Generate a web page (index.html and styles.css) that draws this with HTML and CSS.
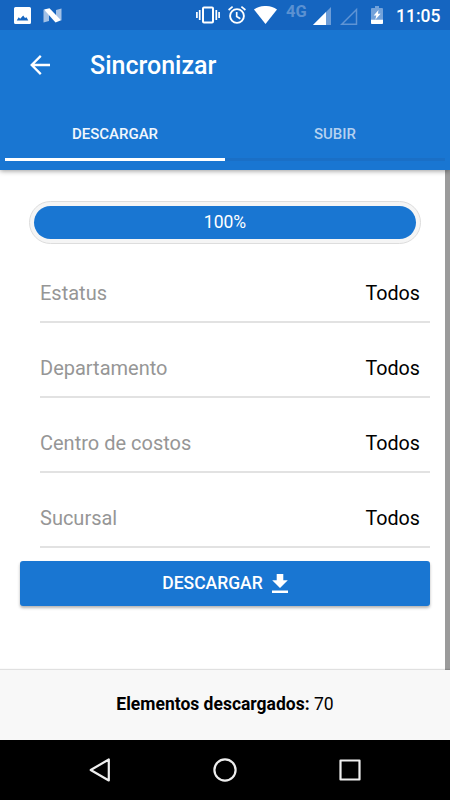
FILE: index.html
```html
<!DOCTYPE html>
<html lang="es">
<head>
    <meta charset="UTF-8">
    <meta name="viewport" content="width=device-width, initial-scale=1.0">
    <title>Sincronizar</title>
    <link rel="stylesheet" href="styles.css">
</head>
<body>

    <div class="status-bar">
        <svg class="icon-image" width="17" height="17" viewBox="0 0 17 17">
            <path fill="#fff" fill-rule="evenodd" d="M1.5 0h14A1.5 1.5 0 0 1 17 1.500v14a1.500 1.500 0 0 1-1.500 1.500h-14A1.500 1.500 0 0 1 0 15.500v-14A1.500 1.500 0 0 1 1.500 0zM2.700 13.400h11.600l-1.800-3.200-1.500.8-1.800-2.500-3 3.300-1.500-1.600z"/>
        </svg>
        <svg class="icon-n" width="19" height="15" viewBox="0 0 19 15">
            <path fill="#a3c1e6" d="M.5 1.500L6 5v8L.5 14.500zM13 2l5.500-1.500v12L13 10z"/>
            <path fill="#fff" d="M1 1.500L6.500.300 18 12.300 12.500 14.500z"/>
        </svg>
        <svg class="icon-vibrate" width="24" height="18" viewBox="0 0 24 18">
            <path fill="none" stroke="#fff" stroke-width="1.700" d="M.9 6v6M3.700 4v10M20.300 4v10M23.100 6v6"/>
            <rect x="7" y="1.500" width="10" height="15" rx="1" fill="none" stroke="#fff" stroke-width="2"/>
        </svg>
        <svg class="icon-alarm" width="18" height="18" viewBox="0 0 18 18">
            <circle cx="9" cy="10" r="6.900" fill="none" stroke="#fff" stroke-width="1.900"/>
            <path fill="none" stroke="#fff" stroke-width="1.700" d="M.6 4L4.600.700M17.400 4L13.400.700M8.700 6v4.500l3.600 2.200"/>
        </svg>
        <svg class="icon-wifi" width="23" height="18" viewBox="0 0 23 18">
            <path fill="#fff" d="M11.500 18L0 3.500C6.500-1.200 16.500-1.200 23 3.500z"/>
        </svg>
        <span class="network">4G</span>
        <svg class="icon-signal" width="18" height="18" viewBox="0 0 18 18">
            <path fill="#6d9dd8" d="M0 18L18 0v18z"/>
            <path fill="#fff" d="M0 18L13 5v13z"/>
        </svg>
        <svg class="icon-no-signal" width="18" height="18" viewBox="0 0 18 18">
            <path fill="none" stroke="#5f94d4" stroke-width="1.500" d="M1.800 17.200L16.500 2.500v14.700z"/>
        </svg>
        <svg class="icon-battery" width="12" height="18" viewBox="0 0 12 18">
            <path fill="#73a2da" d="M1 2h3V0h4v2h3a1 1 0 0 1 1 1v14a1 1 0 0 1-1 1H1a1 1 0 0 1-1-1V3a1 1 0 0 1 1-1z"/>
            <path fill="#fff" d="M0 13.700h12V17a1 1 0 0 1-1 1H1a1 1 0 0 1-1-1zM7.500 4L2.700 9.500H5.300L4.300 13.700 9.600 7.700H6.900z"/>
        </svg>
        <span class="clock">11:05</span>
    </div>

    <header>
        <div class="toolbar">
            <svg class="back" width="20" height="20" viewBox="0 0 20 20">
                <path fill="none" stroke="#fff" stroke-width="2.300" d="M20 10H1.800M10.800.900L1.700 10l9.100 9.100"/>
            </svg>
            <h1>Sincronizar</h1>
        </div>
        <nav class="tabs">
            <a class="tab active">DESCARGAR</a>
            <a class="tab">SUBIR</a>
        </nav>
    </header>

    <main>
        <div class="progress">
            <div class="progress-bar">100%</div>
        </div>

        <div class="item"><label>Estatus</label><span>Todos</span></div>
        <div class="item"><label>Departamento</label><span>Todos</span></div>
        <div class="item"><label>Centro de costos</label><span>Todos</span></div>
        <div class="item"><label>Sucursal</label><span>Todos</span></div>

        <button type="button">
            DESCARGAR
            <svg width="16" height="19" viewBox="0 0 16 19">
                <path fill="#fff" d="M4.700 0h6.600v6.200h4.500L8 14 .2 6.200h4.500zM0 16.400h16V19H0z"/>
            </svg>
        </button>
    </main>

    <footer>
        <b>Elementos descargados:</b>&nbsp;70
    </footer>

    <div class="nav-bar">
        <svg width="24" height="24" viewBox="0 0 24 24">
            <path d="M20.800 1.500v21L2.700 12z"/>
        </svg>
        <svg width="24" height="24" viewBox="0 0 24 24">
            <circle cx="12" cy="12" r="10.600"/>
        </svg>
        <svg width="24" height="24" viewBox="0 0 24 24">
            <rect x="2.500" y="2.500" width="19" height="19"/>
        </svg>
    </div>

</body>
</html>
```
FILE: styles.css
```css
body {
    margin: 0;
    height: 800px;
    display: flex;
    flex-direction: column;
    font-family: Roboto, sans-serif;
    background-color: #fff;
    color: #000;
    overflow: hidden;
}

svg {
    display: block;
    flex: none;
}

.status-bar {
    position: relative;
    z-index: 1;
    display: flex;
    align-items: center;
    height: 30px;
    padding-left: 14px;
    box-sizing: border-box;
    background-color: #1565c0;
    color: #fff;
}

.icon-n {
    margin-left: 12px;
}

.icon-vibrate {
    margin-left: 134px;
}

.icon-alarm {
    margin-left: 8px;
}

.icon-wifi {
    margin-left: 8px;
}

.network {
    width: 22px;
    margin: 0 5px 7px 9px;
    font-size: 16.5px;
    font-weight: 700;
    line-height: 16px;
    color: #5b91d2;
}

.icon-signal {
    margin-top: 2px;
}

.icon-no-signal {
    margin: 2px 0 0 9px;
}

.icon-battery {
    margin-left: 13px;
}

.clock {
    margin: 1px 0 0 13px;
    font-size: 17.5px;
    font-weight: 500;
}

header {
    position: relative;
    height: 140px;
    background-color: #1976d2;
    color: #fff;
    box-shadow: 0 1px 5px rgba(0, 0, 0, 0.4);
}

.toolbar {
    display: flex;
    align-items: center;
    height: 70px;
    padding-left: 30px;
}

h1 {
    margin: 2px 0 0 40px;
    font-size: 25px;
    font-weight: 500;
    line-height: 30px;
}

.tabs {
    display: flex;
    padding: 0 5px;
}

.tab {
    flex: 1;
    height: 61px;
    box-sizing: border-box;
    border-bottom: 3px solid #1a6fc6;
    font-size: 15px;
    font-weight: 500;
    line-height: 69px;
    text-align: center;
    color: #b4d1f0;
}

.tab.active {
    border-color: #fff;
    color: #f1f7fd;
}

main {
    height: 500px;
    padding: 31px 15px 0 20px;
    box-sizing: border-box;
    border-right: 5px solid #9b9b9b;
}

.progress {
    height: 43px;
    margin: 0 9px;
    padding: 4px;
    box-sizing: border-box;
    border: 1px solid #ddd;
    border-radius: 22px;
    background-color: #f5f5f5;
}

.progress-bar {
    height: 33px;
    border-radius: 17px;
    background-color: #1976d2;
    color: #fff;
    font-size: 17.5px;
    line-height: 33px;
    text-align: center;
}

.item {
    display: flex;
    justify-content: space-between;
    height: 75px;
    margin-left: 20px;
    padding-right: 10px;
    box-sizing: border-box;
    border-bottom: 2px solid #e2e2e2;
    font-size: 20px;
    line-height: 90px;
}

.progress + .item {
    margin-top: 4px;
}

.item label {
    color: #969696;
}

.item span {
    font-size: 19.7px;
    line-height: 92px;
}

button {
    display: flex;
    justify-content: center;
    align-items: center;
    gap: 9px;
    width: 100%;
    height: 45px;
    margin-top: 13px;
    padding: 0 0 2px;
    border: none;
    border-radius: 3px;
    background-color: #1976d2;
    color: #fff;
    font-family: inherit;
    font-size: 17.5px;
    font-weight: 500;
    box-shadow: 0 2px 3px rgba(0, 0, 0, 0.3);
}

button svg {
    margin-top: 2px;
}

footer {
    display: flex;
    justify-content: center;
    align-items: center;
    height: 70px;
    padding-bottom: 2px;
    box-sizing: border-box;
    background-color: #f8f8f8;
    font-size: 17.5px;
    box-shadow: 0 -1px 1px rgba(0, 0, 0, 0.12);
}

.nav-bar {
    display: flex;
    justify-content: center;
    align-items: center;
    gap: 101px;
    height: 60px;
    background-color: #000;
}

.nav-bar svg {
    fill: none;
    stroke: #eee;
    stroke-width: 2.2;
    stroke-linejoin: round;
}
```
